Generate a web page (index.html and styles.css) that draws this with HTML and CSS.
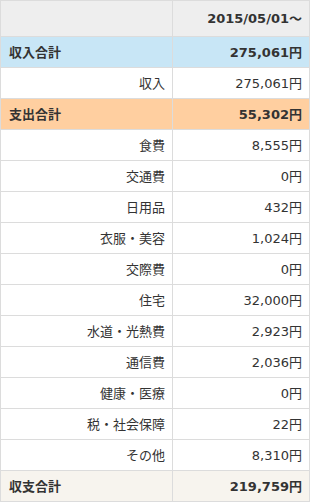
FILE: index.html
```html
<!DOCTYPE html>
<html lang="ja">
<head>
<meta charset="utf-8">
<link rel="stylesheet" href="styles.css">
</head>
<body>
<table class="report">
  <tr class="head"><th class="label"></th><th class="val">2015/05/01～</th></tr>
  <tr class="income-total sum"><td class="label">収入合計</td><td class="val">275,061円</td></tr>
  <tr><td class="label">収入</td><td class="val">275,061円</td></tr>
  <tr class="expense-total sum"><td class="label">支出合計</td><td class="val">55,302円</td></tr>
  <tr><td class="label">食費</td><td class="val">8,555円</td></tr>
  <tr><td class="label">交通費</td><td class="val">0円</td></tr>
  <tr><td class="label">日用品</td><td class="val">432円</td></tr>
  <tr><td class="label">衣服・美容</td><td class="val">1,024円</td></tr>
  <tr><td class="label">交際費</td><td class="val">0円</td></tr>
  <tr><td class="label">住宅</td><td class="val">32,000円</td></tr>
  <tr><td class="label">水道・光熱費</td><td class="val">2,923円</td></tr>
  <tr><td class="label">通信費</td><td class="val">2,036円</td></tr>
  <tr><td class="label">健康・医療</td><td class="val">0円</td></tr>
  <tr><td class="label">税・社会保障</td><td class="val">22円</td></tr>
  <tr><td class="label">その他</td><td class="val">8,310円</td></tr>
  <tr class="balance sum"><td class="label">収支合計</td><td class="val">219,759円</td></tr>
</table>
</body>
</html>
```
FILE: styles.css
```css
html, body {
  margin: 0;
  padding: 0;
  background: #fff;
}
.report {
  width: 310px;
  border-collapse: collapse;
  border: 1px solid #dcdcdc;
  font-family: "DejaVu Sans", "Noto Sans CJK JP", sans-serif;
  font-size: 13px;
  color: #333;
  table-layout: fixed;
}
.report th, .report td {
  border: 1px solid #dcdcdc;
  height: 31px;
  padding: 0 7px 2px 6px;
  box-sizing: border-box;
  text-align: right;
  white-space: nowrap;
}
.report .label {
  width: 172px;
}
.report .head th {
  height: 36px;
  background: #eeeeee;
  font-weight: bold;
}
.report .sum td {
  font-weight: bold;
}
.report .sum .label {
  text-align: left;
  padding-left: 8px;
}
.income-total td { background: #c8e6f6; }
.expense-total td { background: #ffcfa0; }
.balance td { background: #f7f4ee; }
```
